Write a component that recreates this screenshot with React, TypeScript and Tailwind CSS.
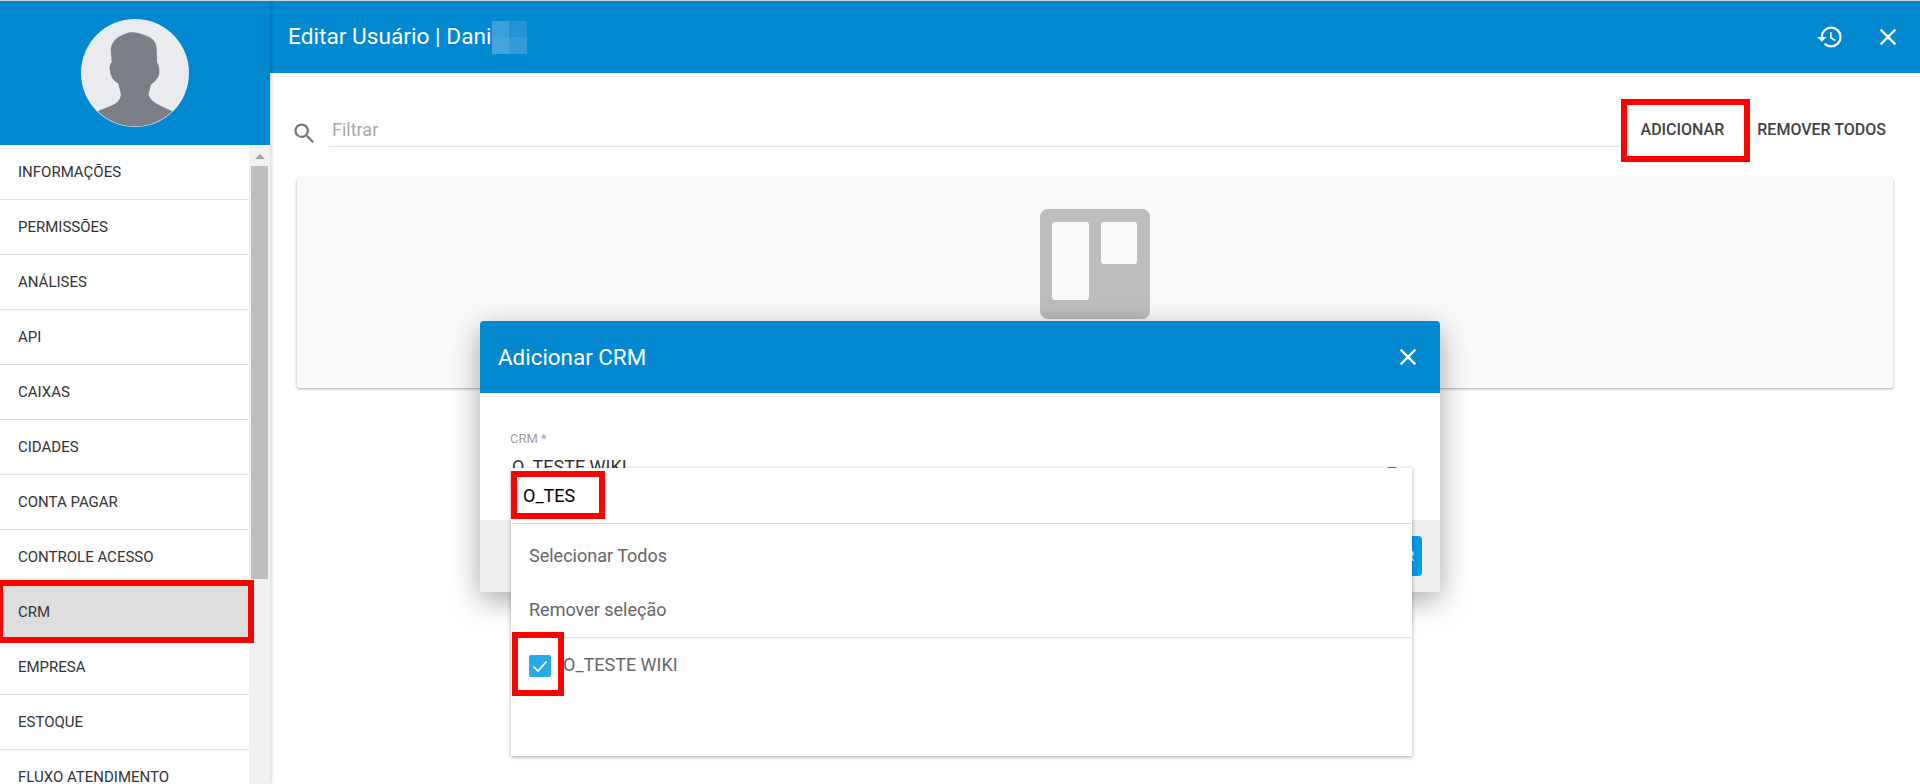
import React from "react";
import { MdClose, MdHistory, MdSearch } from "react-icons/md";

const menuItems = [
  "INFORMAÇÕES",
  "PERMISSÕES",
  "ANÁLISES",
  "API",
  "CAIXAS",
  "CIDADES",
  "CONTA PAGAR",
  "CONTROLE ACESSO",
  "CRM",
  "EMPRESA",
  "ESTOQUE",
  "FLUXO ATENDIMENTO",
];

const Avatar = () => (
  <svg viewBox="0 0 324 324" className="h-[108px] w-[108px]">
    <circle cx="162" cy="162" r="162" fill="#e9ebef" />
    <g transform="translate(-18,-11)">
      <path
        d="M68 288 L115 268 Q135 258 138 238 L130 205 Q106 192 105 165 Q100 150 110 140 L107 100 Q110 70 150 55 Q175 45 210 60 Q245 70 245 100 L246 140 Q258 160 250 185 Q240 200 228 208 L220 238 Q230 258 250 268 L292 288 A162 162 0 0 1 68 288 Z"
        fill="#7a7f88"
      />
    </g>
  </svg>
);

const BoardIcon = () => (
  <svg viewBox="0 0 110 110" className="h-[110px] w-[110px]">
    <rect width="110" height="110" rx="8" fill="#bdbdbd" />
    <rect x="12" y="13" width="37" height="78" rx="3" fill="#fafafa" />
    <rect x="61" y="13" width="36" height="42" rx="3" fill="#fafafa" />
  </svg>
);

const App = () => {
  return (
    <div className="relative flex h-[784px] w-full overflow-hidden border-t border-[#c9d3d9] bg-white font-['Roboto',sans-serif]">
      {/* menu lateral */}
      <aside className="z-10 flex h-full w-[270px] shrink-0 flex-col shadow-[1px_0_4px_rgba(0,0,0,0.2)]">
        <div className="flex h-[144px] shrink-0 items-start justify-center bg-[#0288d1] pt-[18px]">
          <Avatar />
        </div>
        <div className="flex min-h-0 flex-1 overflow-hidden">
          <ul className="w-[249px] shrink-0">
            {menuItems.map((item) => (
              <li
                key={item}
                className={`flex h-[55px] items-center border-b border-[#e0e0e0] pl-[18px] text-[15px] text-[#333333] ${
                  item === "CRM" ? "bg-[#dedede]" : ""
                }`}
              >
                {item}
              </li>
            ))}
          </ul>
          <div className="flex flex-1 flex-col items-center bg-[#f1f1f1] pl-[2px] pr-[2px] pt-[9px]">
            <div className="h-0 w-0 border-x-[5px] border-b-[5px] border-x-transparent border-b-[#a3a3a3]"></div>
            <div className="mt-[7px] h-[413px] w-full bg-[#bdbdbd]"></div>
          </div>
        </div>
      </aside>

      {/* conteudo */}
      <main className="flex min-w-0 flex-1 flex-col">
        <header className="flex h-[72px] shrink-0 items-center justify-between bg-[#0288d1] pl-[18px] pr-[18px] text-white">
          <div className="flex items-center">
            <h1 className="text-[22.7px] leading-none">Editar Usuário | Dani</h1>
            <div className="grid h-[33px] w-[35px] grid-cols-2 grid-rows-2">
              <span className="bg-[#3a9fda]"></span>
              <span className="bg-[#2393d5]"></span>
              <span className="bg-[#45a4dc]"></span>
              <span className="bg-[#329bd8]"></span>
            </div>
          </div>
          <div className="flex items-center gap-[30px]">
            <MdHistory size={28} />
            <MdClose size={28} />
          </div>
        </header>

        <div className="flex h-[105px] shrink-0 items-start pl-[21px] pr-[34px] pt-[37px]">
          <MdSearch size={27} className="mr-[11px] mt-[10px] shrink-0 text-[#757575]" />
          <div className="flex h-[37px] flex-1 items-center border-b border-[#e0e0e0] pl-[3px] pt-[2px] text-[18px] text-[#a9a9a9]">
            Filtrar
          </div>
          <div className="ml-[21px] flex h-[37px] items-center pt-[2px] text-[16px] font-medium text-[#424242]">ADICIONAR</div>
          <div className="ml-[33px] flex h-[37px] items-center pt-[2px] text-[16px] font-medium text-[#424242]">REMOVER TODOS</div>
        </div>

        <section className="mx-[27px] flex h-[210px] shrink-0 justify-center rounded-[2px] bg-[#fafafa] pt-[31px] shadow-[0_1px_3px_rgba(0,0,0,0.35)]">
          <BoardIcon />
        </section>
      </main>

      {/* modal */}
      <div className="absolute left-[480px] top-[320px] z-20 flex h-[271px] w-[960px] flex-col overflow-hidden rounded-[4px] bg-white shadow-[0_8px_30px_rgba(0,0,0,0.35)]">
        <div className="flex h-[72px] shrink-0 items-center justify-between bg-[#0288d1] pl-[18px] pr-[18px] text-white">
          <h2 className="text-[22.4px] leading-none">Adicionar CRM</h2>
          <MdClose size={28} />
        </div>
        <div className="flex-1 px-[30px] pt-[39px]">
          <div className="text-[13px] leading-[14px] text-[#9e9e9e]">CRM *</div>
          <div className="flex h-[39px] items-start justify-between border-b border-[#d6d6d6] pt-[10px] text-[18px] leading-[21px] text-[#333333]">
            <span className="pl-[2px]">O_TESTE WIKI</span>
            <span className="mr-[13px] mt-[11px] h-0 w-0 border-x-[5px] border-t-[5px] border-x-transparent border-t-[#757575]"></span>
          </div>
        </div>
        <div className="flex h-[72px] shrink-0 items-center justify-end bg-[#eeeeee] pr-[18px]">
          <button className="flex h-[40px] items-center rounded-[4px] bg-[#039be5] px-[8px] text-[14px] font-bold text-white">
            ADICIONAR
          </button>
        </div>
      </div>

      {/* dropdown do select */}
      <div className="absolute left-[511px] top-[467px] z-30 flex h-[288px] w-[901px] flex-col bg-white text-[18px] text-[#666666] shadow-[0_1px_4px_rgba(0,0,0,0.35)]">
        <div className="flex h-[56px] shrink-0 items-center border-b border-[#e0e0e0] pl-[12px] text-black">O_TES</div>
        <div className="mt-[4px] flex h-[55px] shrink-0 items-center pl-[18px]">Selecionar Todos</div>
        <div className="flex h-[55px] shrink-0 items-center border-b border-[#e0e0e0] pb-[2px] pl-[18px]">Remover seleção</div>
        <div className="flex items-center pl-[18px] pt-[14px]">
          <span className="flex h-[22px] w-[22px] items-center justify-center rounded-[2px] bg-[#29abe8]">
            <svg viewBox="0 0 22 22" className="h-[22px] w-[22px]" fill="none" stroke="white" strokeWidth="1.6">
              <path d="M4.5 11.5 L9 16 L17.5 6.5" />
            </svg>
          </span>
          <span className="ml-[12px] -translate-y-px">O_TESTE WIKI</span>
        </div>
      </div>

      {/* marcacoes vermelhas da captura */}
      <div className="absolute left-[-3px] top-[579px] z-40 h-[63px] w-[257px] border-[6px] border-[#ff0000]"></div>
      <div className="absolute left-[1621px] top-[98px] z-40 h-[63px] w-[129px] border-[6px] border-[#ff0000]"></div>
      <div className="absolute left-[511px] top-[470px] z-40 h-[48px] w-[94px] border-[6px] border-[#ff0000]"></div>
      <div className="absolute left-[512px] top-[631px] z-40 h-[64px] w-[52px] border-[6px] border-[#ff0000]"></div>
    </div>
  );
};

export default App;
